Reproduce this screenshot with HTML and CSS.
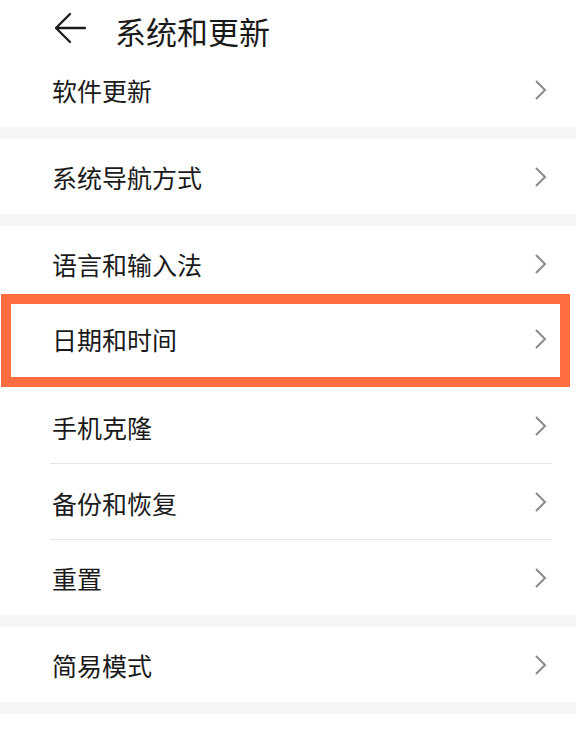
FILE: index.html
```html
<!DOCTYPE html>
<html lang="zh-CN">
<head>
<meta charset="utf-8">
<title>系统和更新</title>
<link rel="stylesheet" href="styles.css">
</head>
<body>
<div class="page">
  <header class="header">
    <svg class="back" width="34" height="34" viewBox="0 0 34 34" aria-hidden="true">
      <path d="M32 16H3M17 2L3 16L17 30" fill="none" stroke="#1c1c1c" stroke-width="2.3" stroke-linecap="round" stroke-linejoin="round"/>
    </svg>
    <h1 class="title">系统和更新</h1>
  </header>

  <section class="group group-first">
    <div class="row"><span class="label">软件更新</span><svg class="chev" width="14" height="22" viewBox="0 0 14 22"><polyline points="2,2 11,11 2,20" fill="none" stroke="#8a8a8a" stroke-width="2"/></svg></div>
  </section>
  <div class="band"></div>

  <section class="group">
    <div class="row"><span class="label">系统导航方式</span><svg class="chev" width="14" height="22" viewBox="0 0 14 22"><polyline points="2,2 11,11 2,20" fill="none" stroke="#8a8a8a" stroke-width="2"/></svg></div>
  </section>
  <div class="band"></div>

  <section class="group">
    <div class="row"><span class="label">语言和输入法</span><svg class="chev" width="14" height="22" viewBox="0 0 14 22"><polyline points="2,2 11,11 2,20" fill="none" stroke="#8a8a8a" stroke-width="2"/></svg></div>
    <div class="row row-highlight"><span class="label">日期和时间</span><svg class="chev" width="14" height="22" viewBox="0 0 14 22"><polyline points="2,2 11,11 2,20" fill="none" stroke="#8a8a8a" stroke-width="2"/></svg></div>
    <div class="row row-divided"><span class="label">手机克隆</span><svg class="chev" width="14" height="22" viewBox="0 0 14 22"><polyline points="2,2 11,11 2,20" fill="none" stroke="#8a8a8a" stroke-width="2"/></svg></div>
    <div class="row row-divided"><span class="label">备份和恢复</span><svg class="chev" width="14" height="22" viewBox="0 0 14 22"><polyline points="2,2 11,11 2,20" fill="none" stroke="#8a8a8a" stroke-width="2"/></svg></div>
    <div class="row"><span class="label">重置</span><svg class="chev" width="14" height="22" viewBox="0 0 14 22"><polyline points="2,2 11,11 2,20" fill="none" stroke="#8a8a8a" stroke-width="2"/></svg></div>
  </section>
  <div class="band"></div>

  <section class="group">
    <div class="row"><span class="label">简易模式</span><svg class="chev" width="14" height="22" viewBox="0 0 14 22"><polyline points="2,2 11,11 2,20" fill="none" stroke="#8a8a8a" stroke-width="2"/></svg></div>
  </section>
  <div class="band"></div>
</div>
</body>
</html>
```

FILE: styles.css
```css
html, body {
  margin: 0;
  padding: 0;
  background: #ffffff;
}

body {
  font-family: "Noto Sans CJK SC", "Noto Sans", sans-serif;
  color: #1a1a1a;
}

.page {
  width: 576px;
  display: flex;
  flex-direction: column;
}

.header {
  height: 52px;
  display: flex;
  align-items: center;
  padding-left: 53px;
  padding-top: 6px;
  gap: 28px;
  box-sizing: border-box;
}

.back {
  display: block;
  flex: none;
}

.title {
  margin: 0;
  font-size: 31px;
  font-weight: 400;
  line-height: 1;
  color: #1a1a1a;
  padding-top: 2px;
}

.group {
  display: flex;
  flex-direction: column;
}

.band {
  height: 12px;
  background: #f5f5f5;
}

.row {
  height: 75px;
  display: flex;
  align-items: center;
  justify-content: space-between;
  padding: 0 28px 0 52px;
  box-sizing: border-box;
  position: relative;
}

.label {
  font-size: 25px;
  line-height: 1;
  padding-top: 2px;
}

.chev {
  display: block;
  flex: none;
}

.row-divided {
  height: 76px;
}

.row-divided::before {
  content: "";
  position: absolute;
  left: 50px;
  right: 24px;
  bottom: 0;
  height: 1px;
  background: #e6e6e6;
}

.row-highlight {
  margin-bottom: 12px;
}

.row-highlight::after {
  content: "";
  position: absolute;
  left: 1px;
  right: 6px;
  top: -7px;
  bottom: -11px;
  border: 10px solid #fe6d40;
  pointer-events: none;
}
```
